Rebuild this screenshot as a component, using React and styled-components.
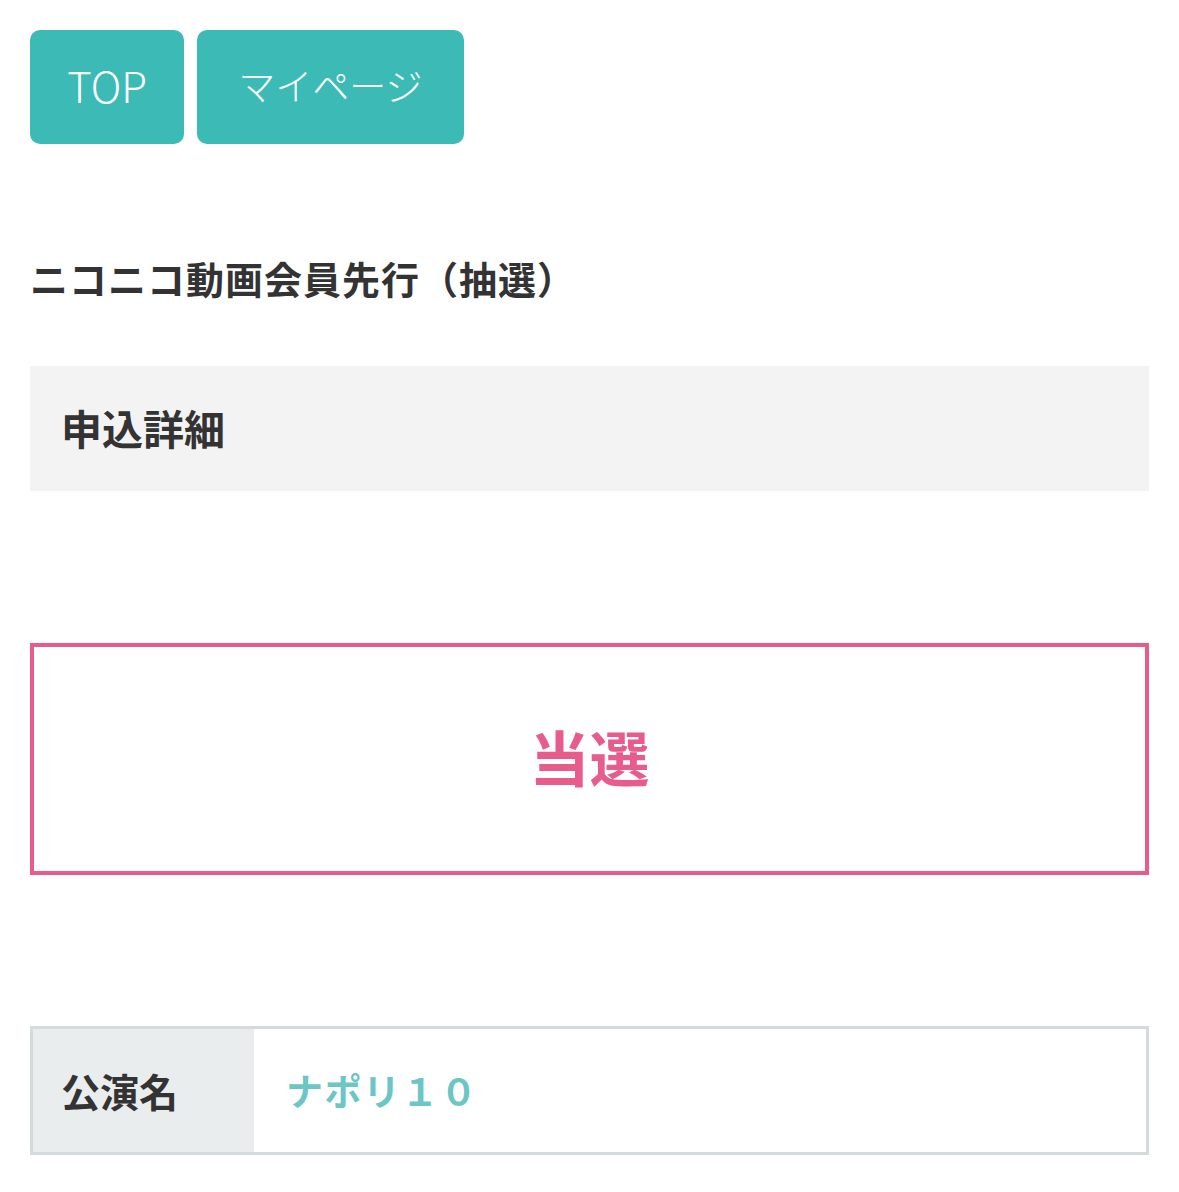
import React from 'react';
import styled, { createGlobalStyle } from 'styled-components';

const GlobalStyle = createGlobalStyle`
  html, body {
    margin: 0;
    padding: 0;
    background: #ffffff;
  }
  body {
    font-family: "Noto Sans CJK JP", "Noto Sans", sans-serif;
    color: #333333;
  }
`;

const Page = styled.div`
  padding: 30px 30px 36px;
  box-sizing: border-box;
  width: 1179px;
`;

const NavRow = styled.nav`
  display: flex;
  gap: 13px;
`;

const NavButton = styled.a`
  display: flex;
  align-items: center;
  justify-content: center;
  height: 114px;
  width: ${(p) => p.$w}px;
  padding-bottom: 5px;
  box-sizing: border-box;
  background: #3bbab6;
  border-radius: 10px;
  color: #ffffff;
  font-size: ${(p) => p.$size || 38}px;
  font-weight: 300;
  text-decoration: none;
`;

const Title = styled.h1`
  margin: 106px 0 0;
  font-size: 38px;
  line-height: 55px;
  font-weight: 700;
  letter-spacing: 1px;
  color: #333333;
`;

const SectionHead = styled.h2`
  margin: 61px 0 0;
  height: 125px;
  display: flex;
  align-items: center;
  padding: 0 0 4px 31px;
  box-sizing: border-box;
  background: #f3f3f3;
  font-size: 41px;
  font-weight: 700;
  color: #333333;
`;

const ResultBox = styled.div`
  margin-top: 152px;
  height: 232px;
  box-sizing: border-box;
  border: 4px solid #e85c8b;
  display: flex;
  align-items: center;
  justify-content: center;
  padding: 0 0 8px 0;
  color: #e85c8b;
  font-size: 60px;
  font-weight: 700;
`;

const InfoTable = styled.div`
  margin-top: 151px;
  border: 3px solid #d5dbdd;
  display: grid;
  grid-template-columns: 221px 1fr;
  height: 129px;
  box-sizing: border-box;
`;

const Label = styled.div`
  background: #e9edee;
  display: flex;
  align-items: center;
  padding: 0 0 2px 28px;
  font-size: 39px;
  font-weight: 700;
  color: #333333;
`;

const Value = styled.div`
  display: flex;
  align-items: center;
  padding: 0 0 2px 32px;
  font-size: 37px;
  font-weight: 700;
  color: #6cc6c6;
  letter-spacing: 1.5px;
`;

export default function App() {
  return (
    <>
      <GlobalStyle />
      <Page>
        <NavRow>
          <NavButton href="#" $w={154} $size={42}>TOP</NavButton>
          <NavButton href="#" $w={267} $size={37}>マイページ</NavButton>
        </NavRow>
        <Title>ニコニコ動画会員先行（抽選）</Title>
        <SectionHead>申込詳細</SectionHead>
        <ResultBox>当選</ResultBox>
        <InfoTable>
          <Label>公演名</Label>
          <Value>ナポリ１０</Value>
        </InfoTable>
      </Page>
    </>
  );
}
